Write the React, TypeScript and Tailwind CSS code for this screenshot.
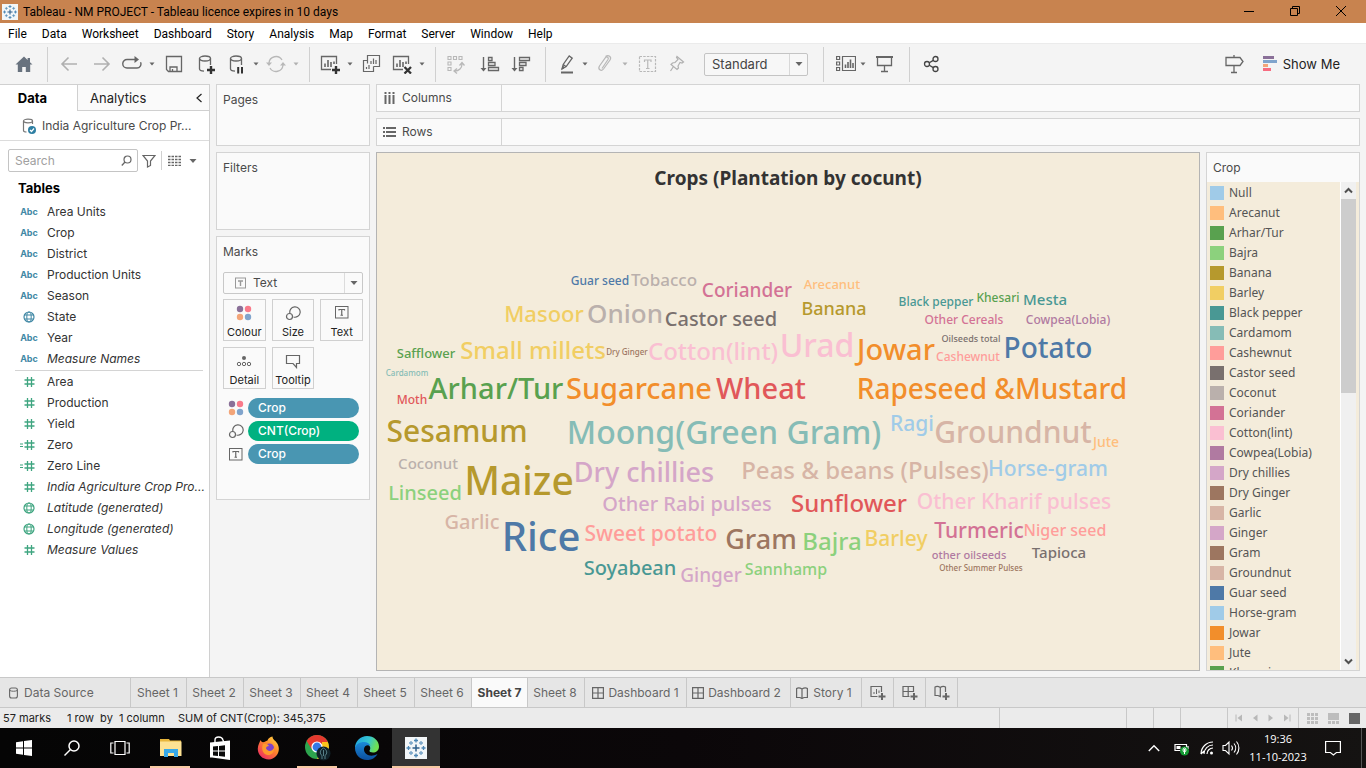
import React, { useState } from "react";
import type { ReactNode } from "react";

const BLUE = "#4e79a7", SKY = "#a0cbe8", ORANGE = "#f28e2b", PEACH = "#ffbe7d", GREEN = "#59a14f";
const LIME = "#8cd17d", GOLD = "#b6992d", YELLOW = "#f1ce63", TEAL = "#499894", AQUA = "#86bcb6";
const RED = "#e15759", CORAL = "#ff9d9a", GREY = "#79706e", SILVER = "#bab0ac", ROSE = "#d37295";
const PINK = "#fabfd2", PURPLE = "#b07aa1", LILAC = "#d4a6c8", BROWN = "#9d7660", TAN = "#d7b5a6";

/* name, centre x, baseline y, font size, colour */
type Word = [string, number, number, number, string];

const words: Word[] = [
  ["Guar seed", 223, 132, 12, BLUE],
  ["Tobacco", 287, 133, 17, SILVER],
  ["Coriander", 370, 144, 19, ROSE],
  ["Arecanut", 455, 136, 13, PEACH],
  ["Masoor", 167, 169, 22, YELLOW],
  ["Onion", 248, 170, 26, SILVER],
  ["Castor seed", 344, 173, 20, GREY],
  ["Banana", 457, 162, 18, GOLD],
  ["Black pepper", 559, 153, 12, TEAL],
  ["Khesari", 621, 149, 12, GREEN],
  ["Mesta", 668, 152, 15, TEAL],
  ["Other Cereals", 587, 171, 12, ROSE],
  ["Cowpea(Lobia)", 691, 171, 12, PURPLE],
  ["Safflower", 49, 205, 13, GREEN],
  ["Small millets", 156, 206, 24, YELLOW],
  ["Dry Ginger", 250, 202, 8, BROWN],
  ["Cotton(lint)", 336, 207, 24, PINK],
  ["Urad", 440, 204, 32, PINK],
  ["Jowar", 519, 207, 29, ORANGE],
  ["Oilseeds total", 594, 189, 9, GREY],
  ["Cashewnut", 591, 208, 12, CORAL],
  ["Potato", 671, 205, 28, BLUE],
  ["Cardamom", 30, 223, 8, AQUA],
  ["Moth", 35, 251, 12, RED],
  ["Arhar/Tur", 119, 246, 29, GREEN],
  ["Sugarcane", 262, 246, 29, ORANGE],
  ["Wheat", 384, 246, 29, RED],
  ["Rapeseed &Mustard", 615, 246, 28, ORANGE],
  ["Sesamum", 80, 289, 30, GOLD],
  ["Moong(Green Gram)", 347, 291, 32, AQUA],
  ["Ragi", 535, 278, 21, SKY],
  ["Groundnut", 636, 290, 30, TAN],
  ["Jute", 729, 294, 14, PEACH],
  ["Coconut", 51, 316, 15, SILVER],
  ["Linseed", 48, 347, 20, LIME],
  ["Maize", 142, 342, 39, GOLD],
  ["Dry chillies", 267, 329, 27, LILAC],
  ["Peas & beans (Pulses)", 488, 326, 24, TAN],
  ["Horse-gram", 671, 323, 21, SKY],
  ["Other Rabi pulses", 310, 358, 20, LILAC],
  ["Sunflower", 472, 359, 24, RED],
  ["Other Kharif pulses", 637, 356, 21, PINK],
  ["Garlic", 95, 376, 20, TAN],
  ["Rice", 164, 398, 40, BLUE],
  ["Sweet potato", 274, 388, 21, CORAL],
  ["Gram", 384, 396, 27, BROWN],
  ["Bajra", 455, 397, 24, LIME],
  ["Barley", 519, 393, 21, YELLOW],
  ["Turmeric", 602, 385, 21, ROSE],
  ["Niger seed", 688, 383, 16, CORAL],
  ["Soyabean", 253, 422, 20, TEAL],
  ["Ginger", 334, 429, 19, LILAC],
  ["Sannhamp", 409, 422, 16, LIME],
  ["other oilseeds", 592, 406, 11, PURPLE],
  ["Tapioca", 682, 405, 15, GREY],
  ["Other Summer Pulses", 604, 418, 8, BROWN],
];

const legend: [string, string][] = [
  ["Null", SKY], ["Arecanut", PEACH], ["Arhar/Tur", GREEN], ["Bajra", LIME], ["Banana", GOLD],
  ["Barley", YELLOW], ["Black pepper", TEAL], ["Cardamom", AQUA], ["Cashewnut", CORAL],
  ["Castor seed", GREY], ["Coconut", SILVER], ["Coriander", ROSE], ["Cotton(lint)", PINK],
  ["Cowpea(Lobia)", PURPLE], ["Dry chillies", LILAC], ["Dry Ginger", BROWN], ["Garlic", TAN],
  ["Ginger", LILAC], ["Gram", BROWN], ["Groundnut", TAN], ["Guar seed", BLUE],
  ["Horse-gram", SKY], ["Jowar", ORANGE], ["Jute", PEACH], ["Khesari", GREEN],
];

function Svg({ children, w = 20, h = 20, className = "" }: { children: ReactNode; w?: number; h?: number; className?: string }) {
  return (
    <svg width={w} height={h} viewBox={`0 0 ${w} ${h}`} fill="none" stroke="currentColor" className={`block shrink-0 ${className}`} aria-hidden="true">
      {children}
    </svg>
  );
}

const plus = <path d="M16 12v8M12 16h8" stroke="#333" strokeWidth="2.4" />;

const icons: Record<string, ReactNode> = {
  home: <path d="M10 2.5 1.5 10.5h2.3V18h4.4v-5h3.6v5h4.4v-7.5h2.3L16 8.2V4h-2.4v2Z" fill="#68727e" stroke="none" />,
  back: <path d="M18 10H3M9.5 3.5 3 10l6.500 6.500" strokeWidth="1.6" />,
  forward: <path d="M2 10h15M10.500 3.500 17 10l-6.500 6.500" strokeWidth="1.600" />,
  redo: <><path d="M14 5.500H5a4 4 0 0 0 0 8.500h10a4 4 0 0 0 3.500-5.800M5 5.500h10" strokeWidth="1.400" /><path d="M12.500 2v7l4.500-3.500Z" fill="currentColor" stroke="none" /></>,
  save: <><path d="M2.500 2.500h15v15h-13l-2-2Z" strokeWidth="1.300" /><path d="M6 17v-4h7v4M8.500 17v-2" strokeWidth="1.300" /></>,
  dbAdd: <><path d="M15.500 11V4.500M4.500 4.500V15c0 1.200 1.800 2 4.500 2.200" strokeWidth="1.300" /><ellipse cx="10" cy="4.500" rx="5.500" ry="2.500" strokeWidth="1.300" />{plus}</>,
  dbPause: <><path d="M15.500 11V4.500M4.500 4.500V15c0 1.200 1.800 2 4.500 2.200" strokeWidth="1.300" /><ellipse cx="10" cy="4.500" rx="5.500" ry="2.500" strokeWidth="1.300" /><path d="M12.200 13v6.500M16 13v6.500" stroke="#333" strokeWidth="2" /></>,
  refresh: <><path d="M3 9A7 7 0 0 1 16 6M17 11a7 7 0 0 1-13 3" strokeWidth="1.300" /><path d="M0 8.500h6L3 12ZM14 11.500h6L17 8Z" fill="currentColor" stroke="none" /></>,
  chartAdd: <><path d="M16.500 10V2.500h-15v13H11" strokeWidth="1.300" /><path d="M5 13V9.500M8 13V6M11 13V8M14 10V7.500" strokeWidth="1.600" />{plus}</>,
  chartX: <><path d="M16.500 10V2.500h-15v13H11" strokeWidth="1.300" /><path d="M5 13V9.500M8 13V6M11 13V8M14 10V7.500" strokeWidth="1.600" /><path d="m12.500 13 6.500 6.500M19 13l-6.500 6.500" stroke="#333" strokeWidth="2.300" /></>,
  duplicate: <><path d="M6.500 9.500V1.500h12v11h-6M6.500 6.500h-4v11h10v-5" strokeWidth="1.200" /><path d="M10 10V7M12.500 10V4.500M15 10V6M5.500 15v-2M8 15v-4" strokeWidth="1.200" /></>,
  swap: <><path d="M2 2.500h3v3H2zM7.500 2.500h3v3h-3zM13 2.500h3v3h-3zM2 8h3v3H2zM2 13.500h3v3H2z" strokeWidth="1.100" /><path d="M16 10c0 4-3 7-7 7M13.500 11.500 16 8.500l2.500 3M11 14.500 8 17l3 2.500" strokeWidth="1.300" /></>,
  sortAsc: <><path d="M3.500 3v13" strokeWidth="1.400" /><path d="M.5 14h6L3.500 17.500Z" fill="currentColor" stroke="none" /><path d="M8.500 3.500H12v3H8.500zM8.500 8.500H15v3H8.500zM8.500 13.500h10v3h-10z" strokeWidth="1.300" /></>,
  sortDesc: <><path d="M3.500 3v13" strokeWidth="1.400" /><path d="M.5 14h6L3.500 17.500Z" fill="currentColor" stroke="none" /><path d="M8.500 3.500h10v3h-10zM8.500 8.500H15v3H8.500zM8.500 13.500H12v3H8.500z" strokeWidth="1.300" /></>,
  highlight: <><path d="m5 15 1.200-4.500 6-8.500 3 2.200-6 8.400ZM6.200 10.500l3 2.200" strokeWidth="1.300" /><path d="M5 15l1-2.500 1.500 1Z" fill="currentColor" /><path d="M4 18.500h12" strokeWidth="2" /></>,
  clip: <path d="M7 14.500 13 5.500c1.200-2-1.300-3.600-2.600-1.800L4.500 12c-2 3.200 1.600 6 4 3l6.500-9c2-3.200-1.500-5.800-4.500-3.500" strokeWidth="1.200" />,
  textBox: <><rect x="1.500" y="2.500" width="16" height="15" strokeDasharray="2.500 1.200" strokeWidth="1.200" /><path d="M6.500 8V6h6.500v2M9.750 6v8.500M8 14.500h3.500" strokeWidth="1.200" /></>,
  pin: <path d="M10 2.500 16.500 8l-1.500 1-2-.5-2 3.500.5 2-1.500 1.500-6-5 1.500-1.500 2.500-.5L11 5.500l-1.500-2ZM6.500 12.500 3.500 17" strokeWidth="1.200" />,
  cards: <><path d="M.6 2.500h3v3h-3zM.6 8h3v3h-3zM.6 13.500h3v3h-3zM6.500 2.500h13v14h-13z" strokeWidth="1.200" /><path d="M9.500 14v-3.500M12 14V8M14.500 14V5.500M17 14V9" strokeWidth="1.600" /></>,
  present: <><path d="M1 3h17" strokeWidth="2" /><path d="M2.500 4v7.500h14V4M9.500 11.500V17M6 17.500h7" strokeWidth="1.300" /></>,
  share: <><circle cx="5" cy="10" r="2.500" strokeWidth="1.300" /><circle cx="13.500" cy="5" r="2.500" strokeWidth="1.300" /><circle cx="13.500" cy="15" r="2.500" strokeWidth="1.300" /><path d="m7.300 8.800 4-2.400M7.300 11.200l4 2.400" strokeWidth="1.300" /></>,
  signpost: <path d="M10 1v2M2 3.500h14l3 4-3 4H2ZM10 11.500V18M7 18.500h6" strokeWidth="1.300" />,
};

function Tool({ icon, label, className }: { icon: string; label: string; className: string }) {
  return (
    <button aria-label={label} className={`block h-5 w-5 shrink-0 ${className}`}>
      <Svg>{icons[icon]}</Svg>
    </button>
  );
}

function Caret({ label, className = "" }: { label: string; className?: string }) {
  return (
    <button aria-label={label} className={`block shrink-0 ${className}`}>
      <Svg w={8} h={6}><path d="M1.500 1.500h5L4 4.500Z" fill="currentColor" stroke="none" /></Svg>
    </button>
  );
}

const Sep = ({ className }: { className: string }) => <div className={`h-[35px] w-px shrink-0 bg-[#d0d0d0] ${className}`} />;

function TableauMark({ size }: { size: number }) {
  const c = "#4b86b4";
  return (
    <svg width={size} height={size} viewBox="0 0 22 22" className="block bg-[#f2f6f8]" aria-hidden="true">
      <g stroke={c} strokeWidth="1.300" fill="none">
        <path d="M11 7.500v7M7.500 11h7" stroke="#2d5f8b" strokeWidth="1.500" />
        <path d="M11 1.500v4M9 3.500h4M11 16.500v4M9 18.500h4M3.500 9v4M1.500 11h4M18.500 9v4M16.500 11h4" />
        <path d="M6 4v4M4 6h4M16 4v4M14 6h4M6 14v4M4 16h4M16 14v4M14 16h4" opacity=".75" />
      </g>
    </svg>
  );
}

function TitleBar() {
  return (
    <header className="flex h-[23px] shrink-0 items-center bg-[#c8834f] pr-0.5 pl-0.5 font-['Roboto','Noto_Sans',sans-serif] text-xs text-black">
      <TableauMark size={16} />
      <h1 className="ml-[5px] flex-1 truncate">Tableau - NM PROJECT - Tableau licence expires in 10 days</h1>
      <button aria-label="Minimize" className="flex h-full w-[46px] items-center justify-center"><Svg w={10} h={12}><path d="M0 5.500h10" /></Svg></button>
      <button aria-label="Restore" className="flex h-full w-[46px] items-center justify-center"><Svg w={10} h={12}><path d="M.5 2.500h7v7h-7zM2.500 2.500v-2h7v7h-2" /></Svg></button>
      <button aria-label="Close" className="flex h-full w-[46px] items-center justify-center"><Svg w={10} h={12}><path d="m0 0 10 10M10 0 0 10" /></Svg></button>
    </header>
  );
}

function MenuBar() {
  const items = ["File", "Data", "Worksheet", "Dashboard", "Story", "Analysis", "Map", "Format", "Server", "Window", "Help"];
  return (
    <nav className="flex h-5 shrink-0 items-end gap-[15px] bg-white pb-px pl-2 font-['Roboto','Noto_Sans',sans-serif] text-xs text-black">
      {items.map((m) => <button key={m}>{m}</button>)}
    </nav>
  );
}

function Toolbar() {
  return (
    <div className="flex h-[41px] shrink-0 items-center border-t border-[#ebebeb] bg-[#f4f4f4] pr-[26px] pl-3.5 text-[#666]">
      <Tool icon="home" label="Start page" className="" />
      <Sep className="ml-[13px]" />
      <Tool icon="back" label="Undo" className="ml-[11px] text-[#b0b0b0]" />
      <Tool icon="forward" label="Redo" className="ml-[13px] text-[#b0b0b0]" />
      <Tool icon="redo" label="Replay" className="ml-2.5" />
      <Caret label="Replay options" className="ml-1.5" />
      <Tool icon="save" label="Save" className="ml-2" />
      <Tool icon="dbAdd" label="New data source" className="ml-[11px]" />
      <Tool icon="dbPause" label="Pause auto updates" className="ml-[11px]" />
      <Caret label="Update options" className="ml-1.5" />
      <Tool icon="refresh" label="Run update" className="ml-1.5 text-[#b8b8b8]" />
      <Caret label="Run update options" className="ml-1.5 text-[#b0b0b0]" />
      <Sep className="ml-[9px]" />
      <Tool icon="chartAdd" label="New worksheet" className="ml-2.5" />
      <Caret label="New worksheet options" className="ml-1.5" />
      <Tool icon="duplicate" label="Duplicate" className="ml-[7px]" />
      <Tool icon="chartX" label="Clear sheet" className="ml-[11px]" />
      <Caret label="Clear options" className="ml-1.5" />
      <Sep className="ml-[9px]" />
      <Tool icon="swap" label="Swap rows and columns" className="ml-2.5 text-[#b8b8b8]" />
      <Tool icon="sortAsc" label="Sort ascending" className="ml-3.5" />
      <Tool icon="sortDesc" label="Sort descending" className="ml-[11px]" />
      <Sep className="ml-3.5" />
      <Tool icon="highlight" label="Highlight" className="ml-[11px]" />
      <Caret label="Highlight options" className="ml-1" />
      <Tool icon="clip" label="Group members" className="ml-1.5 text-[#b8b8b8]" />
      <Caret label="Group options" className="ml-1.5 text-[#b0b0b0]" />
      <Tool icon="textBox" label="Show mark labels" className="ml-[9px] text-[#b8b8b8]" />
      <Tool icon="pin" label="Fix axes" className="ml-[9px] text-[#b0b0b0]" />
      <div className="relative ml-[17px] flex w-[104px] shrink-0">
        <select aria-label="Fit" className="h-[23px] w-full appearance-none rounded-[2px] border border-[#c4c4c4] bg-[#f7f7f7] pl-[7px] text-[13px] text-[#444]">
          <option>Standard</option>
          <option>Fit Width</option>
          <option>Entire View</option>
        </select>
        <span className="pointer-events-none absolute inset-y-px right-px flex w-[18px] items-center justify-center border-l border-[#d8d8d8]">
          <Svg w={8} h={6}><path d="M.5 1h7L4 5Z" fill="currentColor" stroke="none" /></Svg>
        </span>
      </div>
      <Sep className="ml-[15px]" />
      <Tool icon="cards" label="Show or hide cards" className="ml-3" />
      <Caret label="Card options" className="ml-[3px]" />
      <Tool icon="present" label="Presentation mode" className="ml-2" />
      <Sep className="ml-3.5" />
      <Tool icon="share" label="Share" className="ml-3 text-[#444]" />
      <Tool icon="signpost" label="Guide" className="ml-auto" />
      <button className="ml-[19px] flex shrink-0 items-center gap-1.5 text-[13px] text-[#222]">
        <Svg w={14} h={16}>
          <g stroke="none">
            <path d="M0 0h11v3H0z" fill="#8a7098" /><path d="M0 4h14v3H0z" fill="#80a4cc" />
            <path d="M0 8h5v3H0z" fill="#f3a579" /><path d="M0 12h8v3H0z" fill="#f76c80" />
          </g>
        </Svg>
        Show Me
      </button>
    </div>
  );
}

function FieldIcon({ kind, measure }: { kind: string; measure: boolean }) {
  if (kind === "abc") return <span className="text-[9px] font-bold text-[#4188a5]">Abc</span>;
  const color = measure ? "text-[#3fa580]" : "text-[#4188a5]";
  if (kind === "geo")
    return (
      <Svg w={12} h={12} className={color}>
        <circle cx="6" cy="6" r="5" strokeWidth="1.200" /><ellipse cx="6" cy="6" rx="2.200" ry="5" />
        <path d="M1.500 4h9M1.500 8h9" />
      </Svg>
    );
  return (
    <Svg w={18} h={12} className={color}>
      <path d="M7.500 1v10M11.500 1v10M4.500 4h10M4.500 8h10" strokeWidth="1.300" />
      {kind === "calc" && <path d="M0 5h3M0 7.500h3" strokeWidth="1.200" />}
    </Svg>
  );
}

function Field({ kind, name, measure = false, italic = false }: { kind: string; name: string; measure?: boolean; italic?: boolean }) {
  return (
    <li className="flex h-[21px] items-center pr-1 pl-5 text-[#333]">
      <span className="mr-[9px] flex w-[18px] shrink-0 justify-center"><FieldIcon kind={kind} measure={measure} /></span>
      <span className={italic ? "whitespace-nowrap italic" : "whitespace-nowrap"}>{name}</span>
    </li>
  );
}

function DataPane() {
  return (
    <aside className="flex w-[210px] shrink-0 flex-col border-r border-[#d0d0d0] bg-white">
      <div className="flex h-[27px] shrink-0 border-t border-[#d0d0d0] text-[13px]">
        <button className="w-[77px] pr-3 font-bold text-black">Data</button>
        <div className="flex flex-1 items-center justify-between border-b border-l border-[#d0d0d0] bg-[#fafafa] pr-1.5 pl-3 text-[#222]">
          <button>Analytics</button>
          <button aria-label="Collapse pane"><Svg w={8} h={10}><path d="M6.500 1 2 5l4.500 4" strokeWidth="1.200" /></Svg></button>
        </div>
      </div>
      <div className="flex h-[30px] shrink-0 items-center border-b border-[#dcdcdc] pl-[22px] text-[#4a4a4a]">
        <Svg w={14} h={16} className="mr-1.5">
          <path d="M10.500 6V3M1.500 3v9.500c0 1 1.500 1.500 3 1.500" stroke="#777" strokeWidth="1.200" />
          <ellipse cx="6" cy="3" rx="4.500" ry="1.800" stroke="#777" strokeWidth="1.200" />
          <circle cx="10" cy="12" r="4" fill="#2e7fa3" stroke="none" /><path d="m8 12 1.500 1.500L12 10.500" stroke="#fff" strokeWidth="1.200" />
        </Svg>
        India Agriculture Crop Pr...
      </div>
      <div className="mt-2 flex shrink-0 items-center pl-2 text-[#666]">
        <div className="relative flex w-[130px]">
          <input aria-label="Search" placeholder="Search" className="h-[23px] w-full rounded-[2px] border border-[#c4c4c4] bg-white pr-6 pl-1.5 text-xs text-[#333] placeholder:text-[#a0a0a0]" />
          <span className="pointer-events-none absolute inset-y-0 right-1.5 flex items-center"><Svg w={11} h={11}><circle cx="6.500" cy="4.500" r="3.500" strokeWidth="1.200" /><path d="M4 7 .8 10.500" strokeWidth="1.300" /></Svg></span>
        </div>
        <button aria-label="Filter fields" className="ml-1"><Svg w={14} h={14}><path d="M1 1.500h12L8.500 7v4.500l-3 1.500V7Z" strokeWidth="1.200" /></Svg></button>
        <div className="ml-[5px] h-[19px] w-px bg-[#d0d0d0]" />
        <button aria-label="View options" className="ml-1.5 flex items-center gap-2">
          <Svg w={13} h={11}><path d="M0 1.500h13M0 4.500h13M0 7.500h13M0 10.500h13" strokeDasharray="2.500 1" strokeWidth="1.300" /></Svg>
          <Svg w={8} h={6}><path d="M.5 1h7L4 5Z" fill="currentColor" stroke="none" /></Svg>
        </button>
      </div>
      <h2 className="mt-1.5 h-[23px] shrink-0 pl-[18px] text-[13px] leading-5 font-bold text-black">Tables</h2>
      <ul className="min-h-0 overflow-hidden">
        <Field kind="abc" name="Area Units" />
        <Field kind="abc" name="Crop" />
        <Field kind="abc" name="District" />
        <Field kind="abc" name="Production Units" />
        <Field kind="abc" name="Season" />
        <Field kind="geo" name="State" />
        <Field kind="abc" name="Year" />
        <Field kind="abc" name="Measure Names" italic />
        <li className="mt-px mr-1.5 ml-[15px] h-px bg-[#d4d4d4]" />
        <Field kind="num" name="Area" measure />
        <Field kind="num" name="Production" measure />
        <Field kind="num" name="Yield" measure />
        <Field kind="calc" name="Zero" measure />
        <Field kind="calc" name="Zero Line" measure />
        <Field kind="num" name="India Agriculture Crop Pro..." measure italic />
        <Field kind="geo" name="Latitude (generated)" measure italic />
        <Field kind="geo" name="Longitude (generated)" measure italic />
        <Field kind="num" name="Measure Values" measure italic />
      </ul>
    </aside>
  );
}

const ColourIcon = () => (
  <Svg w={16} h={16}>
    <g stroke="none"><circle cx="4" cy="4" r="3.200" fill="#8a7098" /><circle cx="12" cy="4" r="3.200" fill="#f97a8a" /><circle cx="4" cy="12" r="3.200" fill="#f3a579" /><circle cx="12" cy="12" r="3.200" fill="#80a4cc" /></g>
  </Svg>
);
const SizeIcon = () => (
  <Svg w={16} h={16}><path d="M5 8.500A5.200 5.200 0 1 1 8.500 12" strokeWidth="1.200" /><circle cx="4.500" cy="11.500" r="3" strokeWidth="1.200" /></Svg>
);
const TextIcon = ({ color = "#666" }: { color?: string }) => (
  <Svg w={14} h={14}><rect x=".5" y="1.500" width="12.500" height="11.500" stroke={color} /><path d="M4 5.500v-1h5.500v1M6.750 4.500V10M5.500 10.250H8" stroke={color} strokeWidth="1.200" /></Svg>
);
const DetailIcon = () => (
  <Svg w={16} h={16}><circle cx="8" cy="5" r="2" fill="currentColor" stroke="none" /><circle cx="3" cy="11" r="1.700" /><circle cx="8" cy="11" r="1.700" /><circle cx="13" cy="11" r="1.700" /></Svg>
);
const TooltipIcon = () => <Svg w={16} h={16}><path d="M1.500 2.500h13v8h-3v4l-3.500-4H1.500Z" strokeWidth="1.200" /></Svg>;

function Mark({ icon, label }: { icon: ReactNode; label: string }) {
  return (
    <button className="flex h-[42px] flex-col items-center justify-between border border-[#d0d0d0] pt-[5px] text-[#666]">
      {icon}
      <span className="text-[11px] leading-[15px] text-[#222]">{label}</span>
    </button>
  );
}

function Pill({ icon, label, green = false }: { icon: ReactNode; label: string; green?: boolean }) {
  return (
    <li className="flex h-5 items-center text-[#666]">
      <span className="flex w-[25px] items-center justify-center">{icon}</span>
      <button className={`h-5 flex-1 rounded-full pl-2.5 text-left font-medium text-white ${green ? "bg-[#00b180]" : "bg-[#4996b2]"}`}>{label}</button>
    </li>
  );
}

function Cards() {
  const card = "shrink-0 border border-[#d4d4d4] bg-[#fafafa] px-1.5";
  return (
    <div className="flex w-[154px] shrink-0 flex-col gap-1.5 text-[#4a4a4a]">
      <section className={`h-[62px] ${card}`}><h2 className="leading-[30px]">Pages</h2></section>
      <section className={`h-[78px] ${card}`}><h2 className="leading-[30px]">Filters</h2></section>
      <section className={`pb-[35px] ${card}`}>
        <h2 className="leading-[30px]">Marks</h2>
        <div className="relative mt-[5px] flex">
          <select aria-label="Mark type" className="h-[22px] w-full appearance-none rounded-[2px] border border-[#c8c8c8] bg-[#fafafa] pl-[29px] text-xs text-[#4a4a4a]">
            <option>Text</option>
            <option>Bar</option>
            <option>Line</option>
          </select>
          <span className="pointer-events-none absolute inset-y-0 left-3 flex items-center"><Svg w={12} h={12}><rect x=".5" y="1" width="10" height="10" stroke="#999" /><path d="M3 4h5M5.500 4v5" stroke="#999" strokeWidth="1.400" /></Svg></span>
          <span className="pointer-events-none absolute inset-y-px right-px flex w-[18px] items-center justify-center border-l border-[#dcdcdc] text-[#666]"><Svg w={8} h={6}><path d="M.5 1h7L4 5Z" fill="currentColor" stroke="none" /></Svg></span>
        </div>
        <div className="mt-[5px] grid grid-cols-3 gap-1.5">
          <Mark icon={<ColourIcon />} label="Colour" />
          <Mark icon={<SizeIcon />} label="Size" />
          <Mark icon={<TextIcon />} label="Text" />
          <Mark icon={<DetailIcon />} label="Detail" />
          <Mark icon={<TooltipIcon />} label="Tooltip" />
        </div>
        <ul className="mt-[9px] mr-1 flex flex-col gap-[3px]">
          <Pill icon={<ColourIcon />} label="Crop" />
          <Pill icon={<SizeIcon />} label="CNT(Crop)" green />
          <Pill icon={<TextIcon />} label="Crop" />
        </ul>
      </section>
    </div>
  );
}

function Shelf({ icon, label }: { icon: ReactNode; label: string }) {
  return (
    <div className="flex h-7 shrink-0 border border-[#d4d4d4] bg-[#fafafa] text-[#4a4a4a]">
      <div className="flex w-[125px] items-center gap-1.5 border-r border-[#d4d4d4] pl-1.5">{icon}{label}</div>
    </div>
  );
}

function WordCloud() {
  return (
    <section className="flex min-w-0 flex-1 flex-col border border-[#b4b4b4] bg-[#f4ecdb] font-['Noto_Sans',sans-serif]">
      <h2 className="h-[50px] shrink-0 text-center text-[19px] leading-[50px] font-bold text-[#333]">Crops (Plantation by cocunt)</h2>
      <svg viewBox="0 50 822 467" className="min-h-0 w-full flex-1" role="img" aria-label="Crops by plantation count">
        {words.map(([name, x, y, size, color]) => (
          <text key={name} x={x} y={y} fontSize={size} fill={color} fontWeight={500} textAnchor="middle">{name}</text>
        ))}
      </svg>
    </section>
  );
}

function Legend() {
  return (
    <aside className="flex w-[154px] shrink-0 flex-col border border-[#d4d4d4] bg-[#f4ecdb]">
      <h2 className="h-[29px] shrink-0 bg-[#fafafa] pl-1.5 leading-[29px] text-[#4a4a4a]">Crop</h2>
      <div className="flex min-h-0 flex-1">
        <ul className="flex-1 overflow-hidden pt-px pl-[3px] font-['Noto_Sans',sans-serif] text-[#555]">
          {legend.map(([name, color]) => (
            <li key={name} className="flex h-5 items-center gap-[5px]">
              <span className="h-3.5 w-3.5" style={{ backgroundColor: color }} />
              {name}
            </li>
          ))}
        </ul>
        <div className="mr-[3px] flex w-4 flex-col border-l border-white bg-[#f0f0f0] text-[#505050]">
          <button aria-label="Scroll up" className="flex h-[17px] items-center justify-center"><Svg w={9} h={7}><path d="M1 5.500 4.500 2 8 5.500" strokeWidth="2" /></Svg></button>
          <div className="h-[194px] bg-[#cdcdcd]" />
          <button aria-label="Scroll down" className="mt-auto flex h-[17px] items-center justify-center"><Svg w={9} h={7}><path d="M1 1.500 4.500 5 8 1.500" strokeWidth="2" /></Svg></button>
        </div>
      </div>
    </aside>
  );
}

const GridIcon = () => <Svg w={12} h={12}><path d="M.6.6h10.800v10.800H.6zM6 .6v10.800M.6 6h10.800" strokeWidth="1.200" /></Svg>;
const StoryIcon = () => <Svg w={12} h={12}><path d="M.6 1.500c2-1.500 3.500-.8 5.400.5 1.900-1.300 3.400-2 5.400-.5v9H8L6 11.500l-2-1H.6ZM6 2v9" strokeWidth="1.200" /></Svg>;
const tabPlus = <path d="M12 8v7M8.500 11.500h7" strokeWidth="2" />;

function SheetTabs() {
  const [active, setActive] = useState(7);
  const tab = "flex h-full shrink-0 items-center border-r border-[#c8c8c8]";
  const sheet = (n: number, w: string) => (
    <button key={n} onClick={() => setActive(n)} className={`${tab} ${w} justify-center ${active === n ? "bg-[#fafafa] font-bold text-[#444]" : "pr-0.5"}`}>Sheet {n}</button>
  );
  return (
    <div className="flex h-[31px] shrink-0 border-y border-[#c8c8c8] bg-[#e6e6e6] text-[#666]">
      <button className={`${tab} w-[131px] gap-1.5 pl-[9px]`}>
        <Svg w={9} h={12}><rect x=".6" y="1" width="7.800" height="10" rx="2" strokeWidth="1.100" /><path d="M.8 3.500c2 1 5.400 1 7.400 0" /></Svg>
        Data Source
      </button>
      {sheet(1, "w-14")}
      {[2, 3, 4, 5, 6].map((n) => sheet(n, "w-[57px]"))}
      {sheet(7, "w-14")}
      {sheet(8, "w-[57px]")}
      <button className={`${tab} w-[102px] justify-center gap-1`}><GridIcon />Dashboard 1</button>
      <button className={`${tab} w-[104px] justify-center gap-1 pr-1`}><GridIcon />Dashboard 2</button>
      <button className={`${tab} w-[71px] justify-center gap-[5px] pr-1`}><StoryIcon />Story 1</button>
      <button aria-label="New worksheet" className={`${tab} w-8 justify-center`}><Svg w={16} h={16}><path d="M11.500 7V1.500H1v10h6.500" strokeWidth="1.200" /><path d="M4 9V7M6.500 9V4M9 8V5.500" />{tabPlus}</Svg></button>
      <button aria-label="New dashboard" className={`${tab} w-8 justify-center`}><Svg w={16} h={16}><path d="M11.500 7V1.500H1v10h6.500M6.200 1.500v10M1 6.500h10.500" strokeWidth="1.200" />{tabPlus}</Svg></button>
      <button aria-label="New story" className={`${tab} w-8 justify-center`}><Svg w={16} h={16}><path d="M11.500 7V2c-2-1.200-3.500-.8-5.200.5C4.500 1.200 3 .8 1 2v8.500h3l2.300 1V2.500" strokeWidth="1.200" />{tabPlus}</Svg></button>
    </div>
  );
}

function StatusBar() {
  return (
    <footer className="flex h-5 shrink-0 items-center bg-[#ebebeb] pl-[3px] text-[11px] text-[#222]">
      <span className="w-16">57 marks</span>
      <span className="w-[111px] whitespace-pre">1 row  by  1 column</span>
      <span>SUM of CNT(Crop): 345,375</span>
      <div className="ml-auto h-full w-[127px] border-l border-[#c8c8c8]" />
      <div className="h-full w-[27px] border-l border-[#c8c8c8]" />
      <div className="h-full w-[27px] border-l border-[#c8c8c8]" />
      <div className="h-full w-[47px] border-l border-[#c8c8c8]" />
      <div className="flex h-full w-[71px] items-center justify-center gap-2 border-l border-[#c8c8c8] text-[#b8b8b8]">
        <button aria-label="First"><Svg w={8} h={8}><path d="M1 .5v7" /><path d="M7 .5v7L2.500 4Z" fill="currentColor" stroke="none" /></Svg></button>
        <button aria-label="Previous"><Svg w={8} h={8}><path d="M6.500.5v7L2 4Z" fill="currentColor" stroke="none" /></Svg></button>
        <button aria-label="Next"><Svg w={8} h={8}><path d="M1.500.5v7L6 4Z" fill="currentColor" stroke="none" /></Svg></button>
        <button aria-label="Last"><Svg w={8} h={8}><path d="M7 .5v7" /><path d="M1 .5v7L5.500 4Z" fill="currentColor" stroke="none" /></Svg></button>
      </div>
      <div className="flex h-full w-[68px] items-center gap-2.5 border-l border-[#c8c8c8] pl-2 text-[#bdbdbd]">
        <button aria-label="Sheet sorter"><Svg w={11} h={11}><path d="M0 1.500h11M0 5.500h11M0 9.500h11" strokeDasharray="3 1" strokeWidth="3" /></Svg></button>
        <button aria-label="Filmstrip"><Svg w={11} h={11}><path d="M0 3.500h11" strokeWidth="7" /><path d="M0 9.500h11" strokeDasharray="3 1" strokeWidth="3" /></Svg></button>
        <button aria-label="Tabs" className="h-[11px] w-[11px] bg-[#666]" />
      </div>
    </footer>
  );
}

function Task({ label, children, className = "w-[49px]", line = "" }: { label: string; children: ReactNode; className?: string; line?: string }) {
  return (
    <button aria-label={label} className={`relative flex h-full shrink-0 items-center justify-center ${className}`}>
      {children}
      {line && <span className={`absolute bottom-0 h-0.5 bg-[#f7c9a3] ${line}`} />}
    </button>
  );
}

function Taskbar() {
  return (
    <div className="flex h-10 shrink-0 items-center bg-gradient-to-r from-[#050505] via-[#0b0709] to-[#151312] font-['Open_Sans','Noto_Sans',sans-serif] text-white">
      <Task label="Start" className="w-12"><Svg w={16} h={16}><path d="M0 2.300 7 1.300v6.200H0zM8 1.100 16 0v7.500H8zM0 8.500h7v6.200l-7-1zM8 8.500h8V16l-8-1.100z" fill="#fff" stroke="none" /></Svg></Task>
      <Task label="Search" className="w-12"><Svg w={18} h={18}><circle cx="11" cy="7" r="5" strokeWidth="1.500" /><path d="m7.500 10.500-6 6" strokeWidth="1.500" /></Svg></Task>
      <Task label="Task view" className="w-12"><Svg w={20} h={16}><path d="M5 1.500h10v13H5zM3.500 3H.8v10h2.700M16.500 3h2.700v10h-2.700" strokeWidth="1.200" /></Svg></Task>
      <Task label="File Explorer" className="ml-0.5 w-[49px]" line="left-1 w-10">
        <Svg w={22} h={20}><g stroke="none"><path d="M0 3V1h9l1 1.500h11V18H0z" fill="#e8b63c" /><path d="M0 3.500h21.500V18H0z" fill="#fde293" /><path d="M4 19v-8h14v8h-4v-4H8v4z" fill="#38a9e8" /></g></Svg>
      </Task>
      <Task label="Store"><Svg w={22} h={24}><path d="M6 7V4c0-4 7-4 8 0l1 3" strokeWidth="1.400" /><path d="M1 6.500 21 4.500V24L3 21.500H1z" fill="#fff" stroke="none" /><path d="M4 10.500 9 10v4.500H4zM10 9.900l6-.6v5.200h-6zM4 15.500h5V20l-5-.6zM10 15.500h6v5.200l-6-.6z" fill="#0a0a0a" stroke="none" /></Svg></Task>
      <Task label="Firefox">
        <svg width="24" height="24" viewBox="0 0 24 24" className="block" aria-hidden="true">
          <defs><linearGradient id="ff" x1="1" y1="0" x2=".2" y2="1"><stop offset="0" stopColor="#ffe44a" /><stop offset=".45" stopColor="#ff8a2a" /><stop offset="1" stopColor="#ee2a62" /></linearGradient></defs>
          <path d="M3.500 4c.6 1.500 1.200 2 2.500 2.200 2 0 2.500-1 4.500-1.700C11 2.500 13 1 15.500.5c0 3 3 4 4.500 6.500 5 8-1 16.500-8 16.500C5 23.500.5 18.500.8 12.500 1 8.500 2.500 7 3.500 4Z" fill="url(#ff)" />
          <circle cx="12.500" cy="12" r="4.500" fill="#8042c8" /><path d="M6 8c3-.5 5 .5 6 2-2 0-3 1-3 2.500 2 3.500 6 3 8-.5.500 5-3 7.500-6.500 7C6 18.500 4 13 6 8Z" fill="#ff9a2d" />
        </svg>
      </Task>
      <Task label="Chrome" line="left-1 w-10">
        <svg width="26" height="26" viewBox="0 0 26 26" className="block" aria-hidden="true">
          <circle cx="12" cy="12" r="12" fill="#2da44e" /><path d="M1.600 6A12 12 0 0 1 22.400 6L23 9H12L7 14.500Z" fill="#e5392e" /><path d="M22.600 6.500A12 12 0 0 1 12 24l5-9V7h5.600Z" fill="#fbc41b" />
          <circle cx="12" cy="12" r="5.600" fill="#fff" /><circle cx="12" cy="12" r="4.400" fill="#3478e5" />
          <circle cx="18.500" cy="18.500" r="7" fill="#102128" /><path d="M18.500 13c-4 2-4 6-1.500 7.500V24M18.500 13c4 2 4 6 1.500 7.500V24M18.500 15v6" stroke="#568087" fill="none" />
        </svg>
      </Task>
      <Task label="Edge">
        <svg width="24" height="24" viewBox="0 0 24 24" className="block" aria-hidden="true">
          <defs>
            <linearGradient id="ea" x1="0" y1="0" x2="1" y2=".3"><stop offset="0" stopColor="#1ba0e0" /><stop offset=".6" stopColor="#36c5d0" /><stop offset="1" stopColor="#6fe052" /></linearGradient>
            <linearGradient id="eb" x1="0" y1="0" x2="0" y2="1"><stop offset="0" stopColor="#1b8ad8" /><stop offset="1" stopColor="#0c4f9e" /></linearGradient>
          </defs>
          <path d="M0 12C0 5 5.500 0 12 0c7 0 12 5 12 10.500 0 4-3 6-6 6-2.500 0-4-1-3.500-2 2-2.500 0-6.500-4-6.500C6 8 2 10 0 12Z" fill="url(#ea)" />
          <path d="M0 12c1-4 5-6 9-6 3 0 5.500 1.500 6.500 4-3-2-7 0-6.500 4 .5 5 7 7.500 13.500 4C19 24.500 12 24 12 24 5 24 0 18.500 0 12Z" fill="url(#eb)" />
        </svg>
      </Task>
      <Task label="Tableau" className="ml-px w-12 bg-[#333]" line="inset-x-0"><TableauMark size={22} /></Task>
      <div className="ml-auto flex h-full items-center">
        <button aria-label="Show hidden icons"><Svg w={12} h={8}><path d="m.8 7 5.200-5.200L11.200 7" strokeWidth="1.400" /></Svg></button>
        <Svg w={16} h={16} className="ml-3.5"><path d="M1 4.500h11.500v6H1zM14 6v3" strokeWidth="1.200" /><path d="M2.500 6h4v3h-4z" fill="#fff" stroke="none" /><circle cx="10.500" cy="11" r="4.500" fill="#149b33" stroke="none" /><path d="M10.500 9v5" /><ellipse cx="10.500" cy="10" rx="1.500" ry="2" /></Svg>
        <Svg w={14} h={14} className="ml-2.5"><path d="M1 13A12 12 0 0 1 13 1M4 13a9 9 0 0 1 9-9M7 13a6 6 0 0 1 6-6M1 13l3-3" strokeWidth="1.200" /><circle cx="11.500" cy="12" r="1.500" fill="#fff" stroke="none" /></Svg>
        <Svg w={18} h={16} className="ml-2"><path d="M1 5.500h2.500L7 2v12l-3.500-3.500H1ZM9.500 5.500a4 4 0 0 1 0 5M12 3.500a7 7 0 0 1 0 9M14.500 1.500a10 10 0 0 1 0 13" strokeWidth="1.100" /></Svg>
        <div className="ml-2 flex w-[60px] flex-col items-center text-[11px] leading-[18px]"><span>19:36</span><span>11-10-2023</span></div>
        <button aria-label="Notifications" className="ml-[17px]"><Svg w={16} h={16}><path d="M.6 1.500h14.800v11h-4l-3 2.500-3-2.500H.6Z" strokeWidth="1.200" /></Svg></button>
        <div className="ml-5 h-full w-[5px] border-l border-[#555]" />
      </div>
    </div>
  );
}

export default function App() {
  return (
    <div className="flex h-screen flex-col overflow-hidden bg-[#f4f4f4] font-['Inter','Noto_Sans',sans-serif] text-xs leading-4">
      <TitleBar />
      <MenuBar />
      <Toolbar />
      <main className="flex min-h-0 flex-1">
        <DataPane />
        <div className="flex min-w-0 flex-1 gap-1.5 px-1.5 pb-1.5">
          <Cards />
          <div className="flex min-w-0 flex-1 flex-col gap-1.5">
            <Shelf label="Columns" icon={<Svg w={13} h={12}><path d="M2.500 0v2M6.500 0v2M10.500 0v2M2.500 3v9M6.500 3v9M10.500 3v9" strokeWidth="2" stroke="#666" /></Svg>} />
            <Shelf label="Rows" icon={<Svg w={13} h={12}><path d="M0 2h2M0 6h2M0 10h2M3 2h10M3 6h10M3 10h10" strokeWidth="2" stroke="#666" /></Svg>} />
            <div className="flex min-h-0 flex-1 gap-1.5">
              <WordCloud />
              <Legend />
            </div>
          </div>
        </div>
      </main>
      <SheetTabs />
      <StatusBar />
      <Taskbar />
    </div>
  );
}
